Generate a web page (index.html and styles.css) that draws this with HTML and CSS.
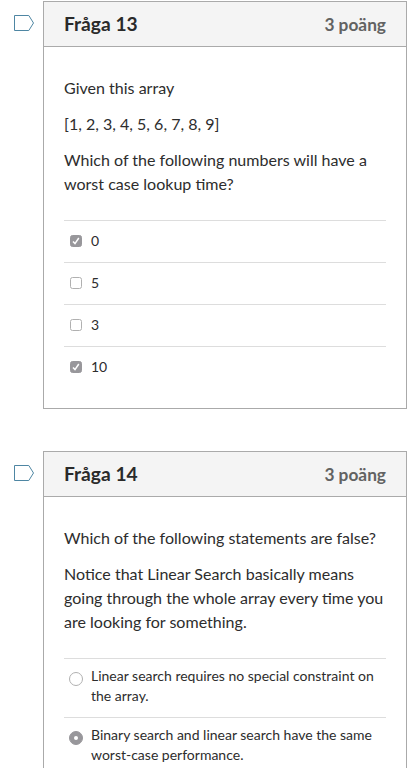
FILE: index.html
```html
<!DOCTYPE html>
<html lang="sv">
<head>
<meta charset="utf-8">
<title>Quiz</title>
<link rel="stylesheet" href="styles.css">
</head>
<body>
<main class="quiz">
  <section class="row">
    <svg class="flag" width="20" height="16" viewBox="0 0 20 16"><path d="M.5.5h14.3l4.7 7.5-4.7 7.5H.5z"/></svg>
    <article class="question">
      <header class="head"><h2 class="name">Fråga 13</h2><span class="points">3 poäng</span></header>
      <div class="body">
        <p class="text">Given this array</p>
        <p class="text">[1, 2, 3, 4, 5, 6, 7, 8, 9]</p>
        <p class="text">Which of the following numbers will have a<br>worst case lookup time?</p>
        <ul class="answers">
          <li class="answer"><svg class="check on" width="12" height="12" viewBox="0 0 12 12"><rect x=".5" y=".5" width="11" height="11" rx="2"/><path d="M3 6.4l2 2.2 3.8-5.6"/></svg><span>0</span></li>
          <li class="answer"><svg class="check" width="12" height="12" viewBox="0 0 12 12"><rect x=".5" y=".5" width="11" height="11" rx="2"/></svg><span>5</span></li>
          <li class="answer"><svg class="check" width="12" height="12" viewBox="0 0 12 12"><rect x=".5" y=".5" width="11" height="11" rx="2"/></svg><span>3</span></li>
          <li class="answer"><svg class="check on" width="12" height="12" viewBox="0 0 12 12"><rect x=".5" y=".5" width="11" height="11" rx="2"/><path d="M3 6.4l2 2.2 3.8-5.6"/></svg><span>10</span></li>
        </ul>
      </div>
    </article>
  </section>
  <section class="row">
    <svg class="flag" width="20" height="16" viewBox="0 0 20 16"><path d="M.5.5h14.3l4.7 7.5-4.7 7.5H.5z"/></svg>
    <article class="question">
      <header class="head"><h2 class="name">Fråga 14</h2><span class="points">3 poäng</span></header>
      <div class="body">
        <p class="text">Which of the following statements are false?</p>
        <p class="text">Notice that Linear Search basically means<br>going through the whole array every time you<br>are looking for something.</p>
        <ul class="answers">
          <li class="answer long"><svg class="radio" width="14" height="14" viewBox="0 0 14 14"><circle cx="7" cy="7" r="6.5"/></svg><span>Linear search requires no special constraint on<br>the array.</span></li>
          <li class="answer long"><svg class="radio on" width="14" height="14" viewBox="0 0 14 14"><circle cx="7" cy="7" r="6.5"/><circle class="dot" cx="7" cy="7" r="2"/></svg><span>Binary search and linear search have the same<br>worst-case performance.</span></li>
        </ul>
      </div>
    </article>
  </section>
</main>
</body>
</html>
```
FILE: styles.css
```css
* { box-sizing: border-box; }
body { margin: 0; background: #fff; color: #2d2d2d; font-family: Lato, sans-serif; }
.quiz { height: 768px; overflow: hidden; padding: 1px 9px 0 14px; display: flex; flex-direction: column; gap: 42px; }
.row { display: flex; align-items: flex-start; gap: 9px; flex: none; }
.flag { flex: none; margin-top: 14px; fill: none; stroke: #4e86a3; stroke-width: 1; }
.question { flex: 1; min-width: 0; height: 408px; border: 1px solid #aaa; }
.head { height: 45px; padding: 0 20px; display: flex; align-items: center; justify-content: space-between; background: #f4f4f4; border-bottom: 1px solid #aaa; }
.name { margin: 0; font-size: 19.2px; line-height: 24px; font-weight: 700; color: #2a2a2a; }
.points { padding-top: 2px; font-size: 17.3px; line-height: 24px; font-weight: 700; color: #626262; }
.body { padding: 29px 20px 0; }
.text { margin: 0 0 12px; font-size: 16.04px; line-height: 24px; white-space: nowrap; }
.answers { list-style: none; margin: 24px 0 0; padding: 0; }
.answer { height: 42px; padding: 0 0 1px 6px; border-top: 1px solid #ddd; display: flex; align-items: center; gap: 9px; font-size: 14px; line-height: 20px; white-space: nowrap; }
.answer.long { height: 59px; padding: 7px 0 0 5px; align-items: flex-start; gap: 8px; }
.check, .radio { flex: none; fill: #fff; stroke: #b0b0b0; }
.radio { margin-top: 6px; }
.on { fill: #98979b; stroke: #98979b; }
.check path { fill: none; stroke: #fff; stroke-width: 1.5; }
.dot { fill: #fff; stroke: none; }
```
